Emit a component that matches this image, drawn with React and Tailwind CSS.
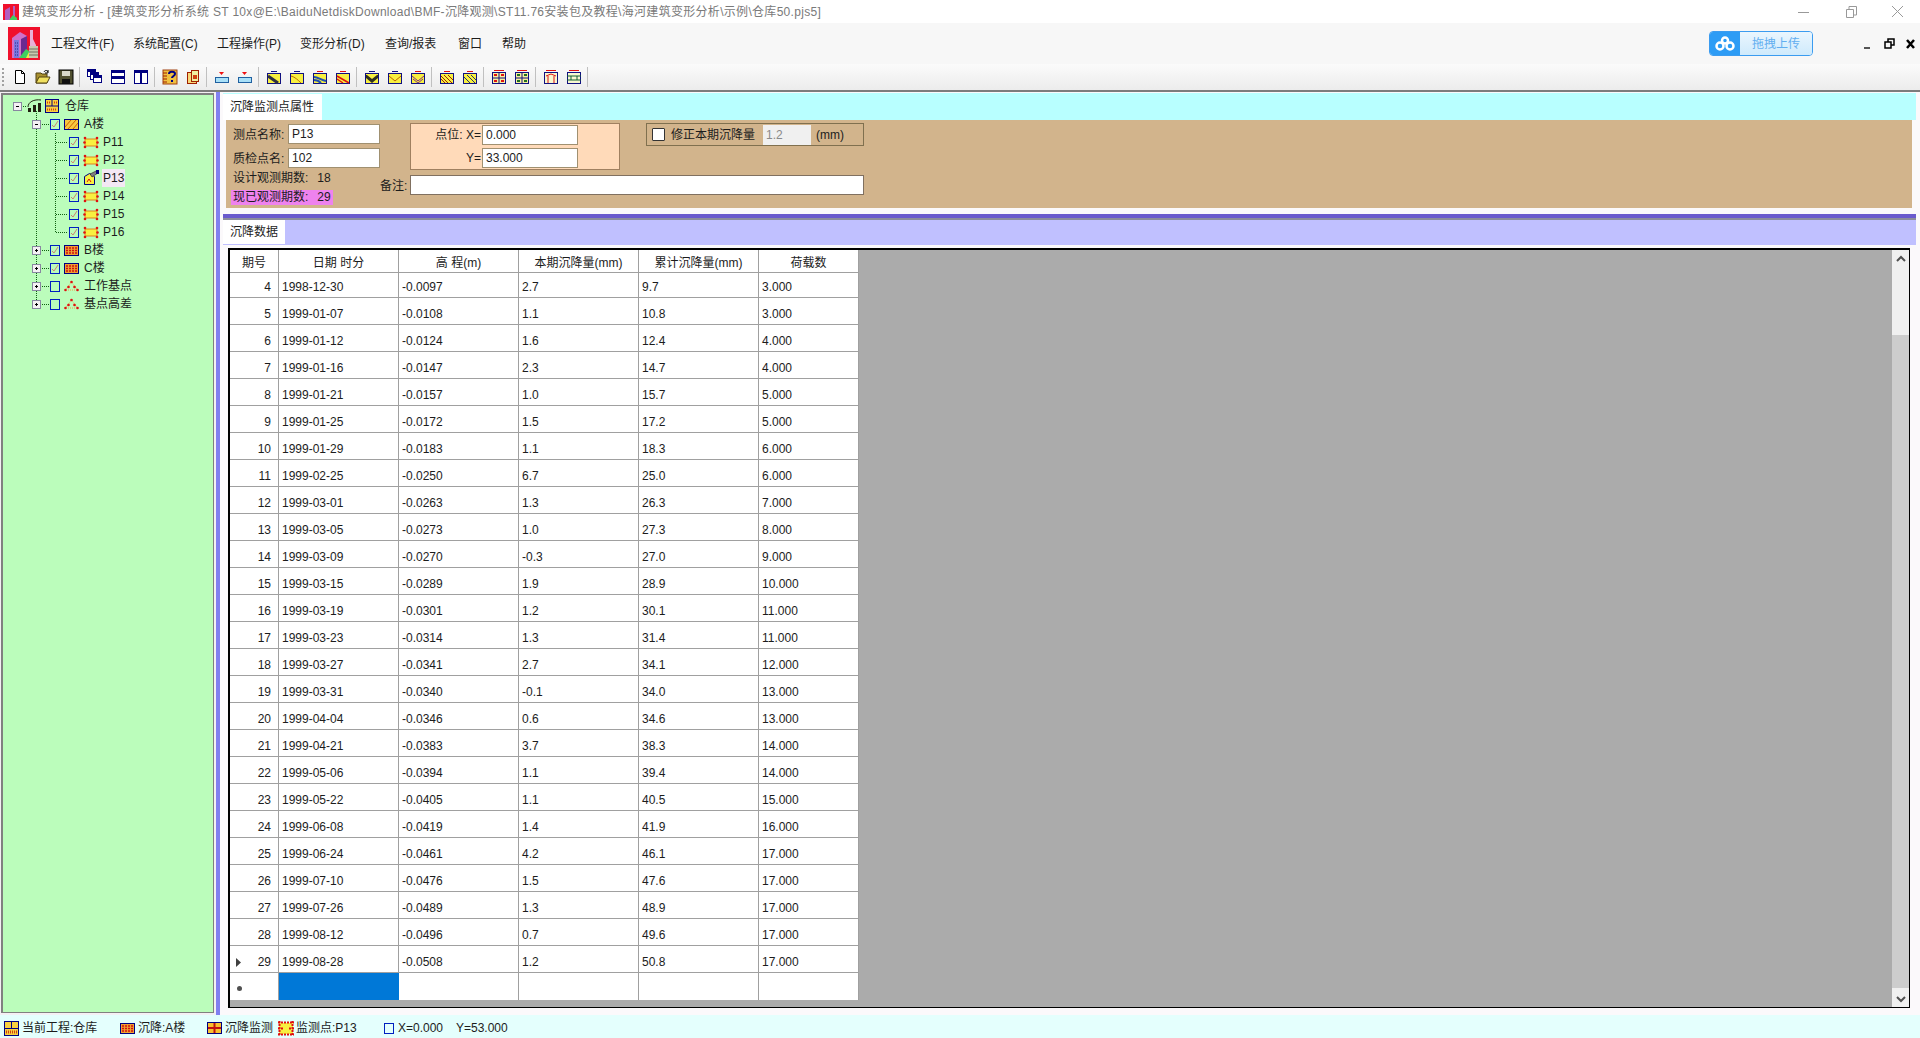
const FONT = "font-['Liberation_Sans','Noto_Sans_CJK_SC',sans-serif]";

const menus = [
  ['工程文件(F)', 'w-[82px]'],
  ['系统配置(C)', 'w-[84px]'],
  ['工程操作(P)', 'w-[83px]'],
  ['变形分析(D)', 'w-[85px]'],
  ['查询/报表', 'w-[73px]'],
  ['窗口', 'w-[44px]'],
  ['帮助', 'w-[30px]'],
];

const rows = [
  [4, '1998-12-30', '-0.0097', '2.7', '9.7', '3.000'],
  [5, '1999-01-07', '-0.0108', '1.1', '10.8', '3.000'],
  [6, '1999-01-12', '-0.0124', '1.6', '12.4', '4.000'],
  [7, '1999-01-16', '-0.0147', '2.3', '14.7', '4.000'],
  [8, '1999-01-21', '-0.0157', '1.0', '15.7', '5.000'],
  [9, '1999-01-25', '-0.0172', '1.5', '17.2', '5.000'],
  [10, '1999-01-29', '-0.0183', '1.1', '18.3', '6.000'],
  [11, '1999-02-25', '-0.0250', '6.7', '25.0', '6.000'],
  [12, '1999-03-01', '-0.0263', '1.3', '26.3', '7.000'],
  [13, '1999-03-05', '-0.0273', '1.0', '27.3', '8.000'],
  [14, '1999-03-09', '-0.0270', '-0.3', '27.0', '9.000'],
  [15, '1999-03-15', '-0.0289', '1.9', '28.9', '10.000'],
  [16, '1999-03-19', '-0.0301', '1.2', '30.1', '11.000'],
  [17, '1999-03-23', '-0.0314', '1.3', '31.4', '11.000'],
  [18, '1999-03-27', '-0.0341', '2.7', '34.1', '12.000'],
  [19, '1999-03-31', '-0.0340', '-0.1', '34.0', '13.000'],
  [20, '1999-04-04', '-0.0346', '0.6', '34.6', '13.000'],
  [21, '1999-04-21', '-0.0383', '3.7', '38.3', '14.000'],
  [22, '1999-05-06', '-0.0394', '1.1', '39.4', '14.000'],
  [23, '1999-05-22', '-0.0405', '1.1', '40.5', '15.000'],
  [24, '1999-06-08', '-0.0419', '1.4', '41.9', '16.000'],
  [25, '1999-06-24', '-0.0461', '4.2', '46.1', '17.000'],
  [26, '1999-07-10', '-0.0476', '1.5', '47.6', '17.000'],
  [27, '1999-07-26', '-0.0489', '1.3', '48.9', '17.000'],
  [28, '1999-08-12', '-0.0496', '0.7', '49.6', '17.000'],
  [29, '1999-08-28', '-0.0508', '1.2', '50.8', '17.000'],
];

const COLS = 'grid grid-cols-[49px_120px_120px_120px_120px_100px] w-[629px]';

function Logo() {
  return (
    <svg width="32" height="33" viewBox="0 0 32 33" className="shrink-0">
      <rect width="32" height="33" fill="#f0102c" />
      <path d="M4 31V11l8-6 7 4v22z" fill="#d070c8" />
      <path d="M6 31V13h5v18z" fill="#7878e0" />
      <path d="M13 31V12l6-3v22z" fill="#6a2a90" />
      <path d="M22 31V3h3v9l3 6v13z" fill="#e8b0d8" />
      <path d="M11 31l7-9 6 4v5z" fill="#40d060" />
      <path d="M18 31l3-6 3 3v3z" fill="#f0f040" />
      <rect x="21" y="19" width="9" height="12" fill="#c8c8b0" />
      <path d="M21 22h9M21 25h9M21 28h9" stroke="#707060" />
      <path d="M7 16h3M7 19h3M7 22h3M7 25h3M7 28h3" stroke="#302080" strokeDasharray="1 1" />
    </svg>
  );
}

const surveyFills = {
  dark: ['#101080', <path key="a" d="M2 7l10 7" stroke="#303040" strokeWidth="3" />],
  line: ['#101080', <path key="a" d="M2 7c4 1 7 4 10 7" stroke="#c07000" fill="none" />],
  curve: ['#e01010', <path key="a" d="M2 8c4 0 7 3 12 4M2 11c3 0 5 1 7 3" stroke="#2050b0" strokeWidth="2" fill="none" />],
  red: ['#e01010', <path key="a" d="M2 7l12 7M2 10l6 4" stroke="#e01010" strokeWidth="1.500" />],
  vdark: ['#101080', <path key="a" d="M2 6h1l5 4 5-4h1v3l-6 5-6-5z" fill="#303020" />],
  vline: ['#101080', <path key="a" d="M2 7l6 5 6-5" stroke="#c06000" fill="none" />],
  vcurve: ['#e01010', <path key="a" d="M2 7l6 5 6-5M3 10l5 4 5-4" stroke="#803080" fill="none" />],
  fine: ['#e01010', <path key="a" d="M2 7l7 7M5 6l8 8M2 10l4 4M9 6l5 5" stroke="#a02000" />],
  fine2: ['#e01010', <path key="a" d="M2 8l6 6M5 6l8 8M9 6l5 5" stroke="#203070" />],
};

function Tool({ kind }) {
  const stroke = '#000080';
  if (kind === 'new') {
    return (
      <svg width="16" height="16" viewBox="0 0 16 16">
        <path d="M3.500 1.500h6l3 3v10h-9z" fill="#fff" stroke="#000" />
        <path d="M9.500 1.500v3h3" fill="none" stroke="#000" />
      </svg>
    );
  }
  if (kind === 'open') {
    return (
      <svg width="16" height="16" viewBox="0 0 16 16">
        <path d="M1 4h5l1 1h5v9H1z" fill="#a89030" stroke="#504010" />
        <path d="M1 14l3-6h11l-3 6z" fill="#f0e060" stroke="#504010" />
        <path d="M9 3c1-2 3-2 4 0M13 1v3h-3" fill="none" stroke="#000" />
      </svg>
    );
  }
  if (kind === 'save') {
    return (
      <svg width="16" height="16" viewBox="0 0 16 16">
        <rect x="1" y="1" width="14" height="14" fill="#505030" stroke="#000" />
        <rect x="4" y="2" width="8" height="5" fill="#d8d8c8" />
        <rect x="4" y="10" width="8" height="5" fill="#101010" />
      </svg>
    );
  }
  if (kind === 'stack') {
    return (
      <svg width="16" height="16" viewBox="0 0 16 16">
        {[1, 4, 7].map((o) => (
          <g key={o}>
            <rect x={o - 0.500} y={o - 0.500} width="8" height="7" fill="#fff" stroke={stroke} />
            <rect x={o - 1} y={o - 1} width="9" height="3" fill={stroke} />
          </g>
        ))}
      </svg>
    );
  }
  if (kind === 'hsplit' || kind === 'vsplit') {
    return (
      <svg width="16" height="16" viewBox="0 0 16 16">
        <rect x="1.500" y="1.500" width="13" height="13" fill="#fff" stroke={stroke} />
        <rect x="1" y="1" width="14" height="3" fill={stroke} />
        {kind === 'hsplit' ? <rect x="1" y="7" width="14" height="3" fill={stroke} /> : <rect x="7" y="2" width="2" height="13" fill={stroke} />}
      </svg>
    );
  }
  if (kind === 'help') {
    return (
      <svg width="16" height="16" viewBox="0 0 16 16">
        <rect x="1" y="1" width="14" height="14" fill="#f0c040" stroke="#a04010" />
        <path d="M1 4h4M1 7h4M1 10h4M1 13h4" stroke="#a02000" />
        <path d="M7 5c0-3 6-3 6 0 0 2-3 2-3 4M10 11v2" fill="none" stroke="#000080" strokeWidth="2" />
      </svg>
    );
  }
  if (kind === 'doc') {
    return (
      <svg width="16" height="16" viewBox="0 0 16 16">
        <rect x="2.500" y="3.500" width="9" height="11" fill="#f8d878" stroke="#a02000" />
        <rect x="6.500" y="1.500" width="7" height="11" fill="#f0f0a0" stroke="#a02000" />
        <rect x="8" y="6" width="4" height="4" fill="#d04010" />
      </svg>
    );
  }
  if (kind === 'cyan') {
    return (
      <svg width="16" height="16" viewBox="0 0 16 16">
        <path d="M5 3h5L7.500 6z" fill="#f01010" />
        <path d="M2 5h3M10 5h4" stroke="#f8f8f8" />
        <rect x="1.500" y="8.500" width="13" height="5" fill="#a8e0f8" stroke="#2060a0" />
      </svg>
    );
  }
  const survey = surveyFills[kind];
  if (survey) {
    return (
      <svg width="16" height="16" viewBox="0 0 16 16">
        <rect x="5" y="2" width="6" height="1" fill={survey[0]} />
        <rect x="1.500" y="4.500" width="13" height="10" fill="#f8f040" stroke="#101080" />
        {survey[1]}
      </svg>
    );
  }
  if (kind === 'grid1' || kind === 'grid2') {
    return (
      <svg width="16" height="16" viewBox="0 0 16 16">
        <rect x="1.500" y="3.500" width="13" height="11" fill="#f8f0a0" stroke="#101080" />
        <rect x="3" y="1" width="10" height="1" fill="#e01010" />
        <path d="M1 9h14M8 4v11" stroke="#101080" />
        <path d="M3 6h3M10 6h3M3 12h3M10 12h3" stroke={kind === 'grid1' ? '#e01010' : '#207020'} strokeWidth="2" />
      </svg>
    );
  }
  return (
    <svg width="16" height="16" viewBox="0 0 16 16">
      <rect x="1.500" y="3.500" width="13" height="11" fill="#f8f8d0" stroke="#101080" />
      <rect x="3" y="1" width="10" height="1" fill="#e01010" />
      {kind === 'frame1' ? (
        <path d="M3 7l5-2 5 2M5 7v7M11 7v7" stroke="#e01010" fill="none" />
      ) : (
        <path d="M1 7h14M1 11h14M5 7v4M11 7v4" stroke="#106030" />
      )}
    </svg>
  );
}

const toolGroups = [
  ['new', 'open', 'save'],
  ['stack', 'hsplit', 'vsplit'],
  ['help', 'doc'],
  ['cyan', 'cyan'],
  ['dark', 'line', 'curve', 'red'],
  ['vdark', 'vline', 'vcurve'],
  ['fine', 'fine2'],
  ['grid1', 'grid2'],
  ['frame1', 'frame2'],
];

function Check({ checked }) {
  return (
    <svg width="12" height="13" viewBox="0 0 12 13" className="shrink-0">
      <rect x="1.500" y="1.500" width="9" height="10" fill="none" stroke="#0020c0" />
      {checked && <path d="M3 7l2 2 4-6" fill="none" stroke="#d08070" />}
    </svg>
  );
}

function PointIcon() {
  return (
    <svg width="16" height="13" viewBox="0 0 16 13" className="shrink-0">
      <rect x="2" y="3" width="12" height="7" fill="#f8f040" />
      <path d="M2 3h12v7H2z" fill="none" stroke="#e08020" />
      {[[2, 2], [14, 2], [1.500, 6.500], [14.500, 6.500], [2, 11], [14, 11]].map(([x, y]) => (
        <circle key={`${x}-${y}`} cx={x} cy={y} r="1.300" fill="#e01010" />
      ))}
    </svg>
  );
}

function ActivePointIcon() {
  return (
    <svg width="16" height="16" viewBox="0 0 16 16" className="shrink-0">
      <path d="M1.500 6.500l5-3 5 3v8h-10z" fill="#f8f040" stroke="#000080" />
      <path d="M4 12l2-3 2 3" fill="none" stroke="#e01010" />
      <path d="M7 4l6-3 2 2-6 4z" fill="#808080" stroke="#000" strokeWidth="0.500" />
      <rect x="13" y="0" width="3" height="4" fill="#000080" />
    </svg>
  );
}

function BlockIcon({ orange }) {
  return (
    <svg width="15" height="11" viewBox="0 0 15 11" className="shrink-0">
      <rect x="0.500" y="0.500" width="14" height="10" fill={orange ? '#f8c840' : '#f0a030'} stroke="#000080" />
      {orange ? (
        <path d="M1 8l6-7M4 10l8-9M9 10l5-6" stroke="#d06000" />
      ) : (
        <path d="M2 3h11M2 5.500h11M2 8h11" stroke="#d01010" strokeWidth="1.500" strokeDasharray="2 1" />
      )}
    </svg>
  );
}

function TriangleIcon() {
  return (
    <svg width="15" height="14" viewBox="0 0 15 14" className="shrink-0">
      <path d="M7.500 3L1.500 11M7.500 3l6 8M4 11h7" stroke="#f0a040" strokeDasharray="1 1" fill="none" />
      {[[7.500, 3], [1.500, 11], [13.500, 11], [4.500, 8], [10.500, 8]].map(([x, y]) => (
        <circle key={`${x}-${y}`} cx={x} cy={y} r="1.300" fill="#e01010" />
      ))}
    </svg>
  );
}

function Expander({ x, open }) {
  return (
    <g>
      <rect x={x - 3.500} y="5.500" width="8" height="8" fill="#f4f0f4" stroke="#8888a0" />
      <path d={`M${x - 1} 9.500h3`} stroke="#000" />
      {!open && <path d={`M${x + 0.500} 8v3`} stroke="#000" />}
    </g>
  );
}

const Dot = (props) => <path stroke="#106010" strokeDasharray="1 1" fill="none" {...props} />;

function RootRow() {
  return (
    <div className="flex items-center h-[18px]">
      <svg width="60" height="18" viewBox="0 0 60 18" className="shrink-0">
        <Dot d="M36.500 14v4" />
        <Dot d="M21 9.500h6" />
        <Expander x={17} open />
        <path d="M28 15v-4h3v4zM33 15V8h3v7zM38 15V6h3v9z" fill="#202010" />
        <path d="M28 10c0-5 6-8 13-7" fill="none" stroke="#202010" />
        <rect x="45.500" y="2.500" width="13" height="13" fill="#f8d040" stroke="#000080" />
        <path d="M45 9h14M52 3v6" stroke="#000080" />
        <path d="M47 12.500h10M47 5.500h3M54 5.500h3" stroke="#d04010" strokeWidth="2" strokeDasharray="1 1" />
      </svg>
      <span className="ml-[5px]">仓库</span>
    </div>
  );
}

function BranchRow({ label, open, checked, last, icon }) {
  return (
    <div className="flex items-center h-[18px]">
      <svg width="49" height="18" viewBox="0 0 49 18" className="shrink-0">
        <Dot d={last ? 'M36.500 0v9' : 'M36.500 0v18'} />
        <Dot d="M40 9.500h9" />
        <Expander x={36} open={open} />
      </svg>
      <Check checked={checked} />
      <span className="ml-[3px] flex">{icon === 'tri' ? <TriangleIcon /> : <BlockIcon orange={icon === 'a'} />}</span>
      <span className="ml-[5px]">{label}</span>
    </div>
  );
}

function LeafRow({ label, active, last }) {
  return (
    <div className="flex items-center h-[18px]">
      <svg width="68" height="18" viewBox="0 0 68 18" className="shrink-0">
        <Dot d="M36.500 0v18" />
        <Dot d={last ? 'M55.500 0v9' : 'M55.500 0v18'} />
        <Dot d="M56 9.500h11" />
      </svg>
      <Check checked />
      <span className="ml-[3px] flex">{active ? <ActivePointIcon /> : <PointIcon />}</span>
      <span className={`ml-[3px] px-[1px] ${active ? 'bg-[#f4e8f4]' : ''}`}>{label}</span>
    </div>
  );
}

function Field({ value, className = '' }) {
  return (
    <div className={`h-[20px] bg-white border border-[#a09070] pl-[3px] leading-[19px] ${className}`}>{value}</div>
  );
}

function Chevron({ down }) {
  return (
    <svg width="10" height="8" viewBox="0 0 10 8">
      <path d={down ? 'M1 2l4 4 4-4' : 'M1 6l4-4 4 4'} fill="none" stroke="#505050" strokeWidth="2" />
    </svg>
  );
}

function StatusIcon({ kind }) {
  if (kind === 'project') {
    return (
      <svg width="15" height="15" viewBox="0 0 15 15" className="shrink-0">
        <rect x="0.500" y="0.500" width="14" height="14" fill="#f8d040" stroke="#000080" />
        <path d="M0 7.500h15M7.500 0v7" stroke="#000080" />
        <path d="M2 11h11" stroke="#d04010" strokeWidth="3" strokeDasharray="1 1" />
      </svg>
    );
  }
  if (kind === 'lot') return <BlockIcon />;
  if (kind === 'monitor') {
    return (
      <svg width="15" height="12" viewBox="0 0 15 12" className="shrink-0">
        <rect x="0.500" y="0.500" width="14" height="11" fill="#f8c030" stroke="#000080" />
        <path d="M1 6h13M7.500 1v10" stroke="#c01010" strokeWidth="2" />
      </svg>
    );
  }
  return (
    <svg width="16" height="15" viewBox="0 0 16 15" className="shrink-0">
      <rect x="1" y="2" width="14" height="11" fill="#f8f040" />
      <path d="M0 1.500h16M0 13.500h16M0 7.500h5M11 7.500h5" stroke="#e01010" strokeWidth="2" strokeDasharray="2 1" />
      <path d="M1.500 0v15M14.500 0v15" stroke="#e01010" strokeWidth="2" strokeDasharray="2 1" />
    </svg>
  );
}

export default function App() {
  return (
    <div className={`${FONT} w-[1920px] h-[1038px] overflow-hidden flex flex-col text-[12px] text-[#1c1c1c] bg-white`}>
      {/* Title bar */}
      <div className="h-[23px] shrink-0 flex items-center bg-white">
        <svg width="16" height="16" viewBox="0 0 16 16" className="ml-[3px] shrink-0">
          <rect width="16" height="16" fill="#f0102c" />
          <path d="M2 16V6l5-3v13zM10 16V2h2v14z" fill="#b060c0" />
          <path d="M6 16l4-5 4 3v2z" fill="#40d060" />
        </svg>
        <span className="ml-[3px] text-[#7a7a7a] whitespace-nowrap tracking-[0.3px]">建筑变形分析 - [建筑变形分析系统 ST 10x@E:\BaiduNetdiskDownload\BMF-沉降观测\ST11.76安装包及教程\海河建筑变形分析\示例\仓库50.pjs5]</span>
        <div className="ml-auto mr-[4px] flex items-center">
          <svg width="46" height="20" viewBox="0 0 46 20"><path d="M0 10.500h11" stroke="#999" /></svg>
          <svg width="47" height="20" viewBox="0 0 47 20"><path d="M2.500 7.500h7v8h-7zM5 7V4.500h7.500V13H10" fill="none" stroke="#999" /></svg>
          <svg width="25" height="20" viewBox="0 0 25 20"><path d="M1 4l11 11M12 4L1 15" stroke="#999" /></svg>
        </div>
      </div>

      {/* Menu bar */}
      <div className="h-[41px] shrink-0 flex items-center bg-[#f7f7f7]">
        <div className="ml-[8px]"><Logo /></div>
        <div className="ml-[11px] flex whitespace-nowrap">
          {menus.map(([m, w]) => <span key={m} className={w}>{m}</span>)}
        </div>
        <div className="ml-auto flex items-center">
          <div className="flex w-[104px] h-[25px] rounded-[4px] border border-[#3b9cf0] overflow-hidden">
            <div className="w-[30px] bg-[#2d9cf5] flex items-center justify-center">
              <svg width="20" height="15" viewBox="0 0 20 15">
                <g fill="none" stroke="#fff" strokeWidth="2.500">
                  <circle cx="10" cy="4.500" r="3" />
                  <circle cx="5" cy="10" r="3.500" />
                  <circle cx="15" cy="10" r="3.500" />
                </g>
              </svg>
            </div>
            <div className="flex-1 bg-gradient-to-b from-[#eaf6fe] to-[#cfeafc] text-[#62aef0] flex items-center justify-center">拖拽上传</div>
          </div>
          <div className="ml-[49px] flex items-center">
            <svg width="20" height="14" viewBox="0 0 20 14"><path d="M2 11h6" stroke="#555" strokeWidth="2" /></svg>
            <svg width="20" height="14" viewBox="0 0 20 14"><path d="M3 5h6v6H3zM6 5V2h6v6H9" fill="none" stroke="#000" strokeWidth="1.500" /></svg>
            <svg width="18" height="14" viewBox="0 0 18 14"><path d="M5 3l7 8M12 3l-7 8" stroke="#000" strokeWidth="2.500" /></svg>
          </div>
        </div>
      </div>

      {/* Toolbar */}
      <div className="h-[28px] shrink-0 flex items-center pl-[2px] bg-gradient-to-b from-[#fbfbfb] to-[#ececec] border-b-2 border-[#7c7c7c]">
        <div className="w-[3px] h-[18px] border-l-2 border-dotted border-[#a0a0a0] mr-[3px]" />
        {toolGroups.map((group, i) => (
          <div key={i} className="flex items-center">
            {group.map((kind, j) => (
              <div key={j} className="w-[23px] flex items-center justify-center"><Tool kind={kind} /></div>
            ))}
            <div className="mx-[2px] w-[1px] h-[20px] bg-[#c0c0c0]" />
            <div className="w-[1px]" />
          </div>
        ))}
      </div>

      {/* Main */}
      <div className="flex-1 min-h-0 flex bg-[#f4f0f4]">
        <div className="w-[213px] shrink-0 ml-[1px] mb-[2px] mt-[1px] bg-[#bbfdbb] border-l-2 border-t-2 border-[#808080] border-r border-b pt-[2px]">
          <div className="-ml-[3px]">
            <RootRow />
            <BranchRow label="A楼" open checked icon="a" />
            {['P11', 'P12', 'P13', 'P14', 'P15', 'P16'].map((p, i) => (
              <LeafRow key={p} label={p} active={p === 'P13'} last={i === 5} />
            ))}
            <BranchRow label="B楼" checked icon="b" />
            <BranchRow label="C楼" checked icon="b" />
            <BranchRow label="工作基点" icon="tri" />
            <BranchRow label="基点高差" icon="tri" last />
          </div>
        </div>
        <div className="w-[4px] shrink-0 ml-[2px] bg-[#8080f0]" />
        <div className="flex-1 min-w-0 flex flex-col pl-[3px] pr-[4px] bg-[#fbf9fb]">
          {/* Properties panel */}
          <div className="h-[27px] shrink-0 mt-[1px] bg-[#b8ffff] flex items-end">
            <div className="h-[26px] w-[99px] bg-white flex items-center pl-[7px]">沉降监测点属性</div>
          </div>
          <div className="h-[88px] shrink-0 ml-[3px] mr-[4px] bg-[#d2b48c] flex">
            <div className="w-[154px] shrink-0 pl-[7px] pt-[4px]">
              <div className="flex items-center gap-[2px]">
                <span className="w-[55px] pt-[2px]">测点名称:</span>
                <Field value="P13" className="w-[95px]" />
              </div>
              <div className="mt-[4px] flex items-center gap-[2px]">
                <span className="w-[55px] pt-[2px]">质检点名:</span>
                <Field value="102" className="w-[95px]" />
              </div>
              <div className="mt-[1px] h-[18px] leading-[18px]">设计观测期数:<span className="ml-[9px]">18</span></div>
              <div className="mt-[3px] ml-[-2px] w-[102px] h-[15px] leading-[15px] pl-[2px] bg-[#ee82ee]">现已观测期数:<span className="ml-[9px]">29</span></div>
            </div>
            <div className="pt-[3px]">
              <div className="flex pl-[30px]">
                <div className="w-[210px] h-[47px] bg-[#ffdab9] border border-[#a08060] flex flex-col pt-[1px] pl-[70px] gap-[3px]">
                  <div className="flex items-center">
                    <span className="w-[0px] mr-[2px] whitespace-nowrap flex justify-end">点位: X=</span>
                    <Field value="0.000" className="w-[96px] ml-[-1px]" />
                  </div>
                  <div className="flex items-center">
                    <span className="w-[0px] mr-[2px] whitespace-nowrap flex justify-end">Y=</span>
                    <Field value="33.000" className="w-[96px] ml-[-1px]" />
                  </div>
                </div>
                <div className="ml-[26px] w-[218px] h-[23px] border border-[#80704f] flex items-center pl-[5px]">
                  <span className="w-[13px] h-[13px] bg-white border border-[#333] rounded-[1px]" />
                  <span className="ml-[6px]">修正本期沉降量</span>
                  <div className="ml-[8px] w-[48px] h-[20px] bg-[#f0f0f0] text-[#8a8a8a] leading-[20px] pl-[3px]">1.2</div>
                  <span className="ml-[5px]">(mm)</span>
                </div>
              </div>
              <div className="mt-[4px] flex items-center">
                <span className="w-[30px] pt-[3px]">备注:</span>
                <div className="w-[454px] h-[20px] bg-white border border-[#807060]" />
              </div>
            </div>
          </div>

          <div className="h-[6px] shrink-0" />
          <div className="h-[4px] shrink-0 bg-[#6a5acd]" />
          <div className="h-[2px] shrink-0 bg-[#8c8c9c]" />

          {/* Data panel */}
          <div className="h-[25px] shrink-0 bg-[#c0c0ff] flex items-start">
            <div className="h-[24px] w-[62px] bg-white flex items-center pl-[7px]">沉降数据</div>
          </div>
          <div className="h-[3px] shrink-0" />
          <div className="h-[760px] shrink-0 ml-[5px] mr-[6px] border-2 border-black border-r-[1px] border-b-[1px] bg-[#ababab] flex">
            <div className="flex-1 min-w-0">
              <div className={`${COLS} h-[21px] bg-white`}>
                {['期号', '日期 时分', '高 程(m)', '本期沉降量(mm)', '累计沉降量(mm)', '荷载数'].map((h) => (
                  <div key={h} className="border-r border-b border-[#a0a0a0] flex items-center justify-center whitespace-nowrap pt-[4px]">{h}</div>
                ))}
              </div>
              {rows.map((r, i) => (
                <div key={r[0]} className={`${COLS} h-[27px] bg-white`}>
                  <div className="border-r border-b border-[#a0a0a0] flex items-center justify-end pr-[7px] pt-[6px]">
                    {i === rows.length - 1 && (
                      <svg width="6" height="9" viewBox="0 0 6 9" className="mr-auto ml-[6px]"><path d="M0 0l5 4.500L0 9z" fill="#404040" /></svg>
                    )}
                    {r[0]}
                  </div>
                  {r.slice(1).map((c, k) => (
                    <div key={k} className="border-r border-b border-[#a0a0a0] flex items-center pl-[3px] pt-[6px]">{c}</div>
                  ))}
                </div>
              ))}
              <div className={`${COLS} h-[27px] bg-white`}>
                <div className="border-r border-[#a0a0a0] flex items-center pl-[7px] pt-[4px]">
                  <span className="w-[5px] h-[5px] rounded-full bg-[#505050]" />
                </div>
                <div className="bg-[#0078d7]" />
                <div className="border-r border-[#a0a0a0]" />
                <div className="border-r border-[#a0a0a0]" />
                <div className="border-r border-[#a0a0a0]" />
                <div className="border-r border-[#a0a0a0]" />
              </div>
            </div>
            <div className="w-[17px] shrink-0 bg-[#f0f0f0] flex flex-col">
              <div className="h-[17px] flex items-center justify-center"><Chevron /></div>
              <div className="h-[68px]" />
              <div className="flex-1 bg-[#cdcdcd]" />
              <div className="h-[2px]" />
              <div className="h-[17px] flex items-center justify-center"><Chevron down /></div>
            </div>
          </div>
        </div>
      </div>

      {/* Status bar */}
      <div className="h-[23px] shrink-0 flex items-center pt-[3px] bg-[#e4fffd] whitespace-nowrap">
        <div className="ml-[4px]"><StatusIcon kind="project" /></div>
        <span className="ml-[3px] w-[98px]">当前工程:仓库</span>
        <StatusIcon kind="lot" />
        <span className="ml-[3px] w-[69px]">沉降:A楼</span>
        <StatusIcon kind="monitor" />
        <span className="ml-[3px] w-[53px]">沉降监测</span>
        <StatusIcon kind="point" />
        <span className="ml-[2px] w-[87px]">监测点:P13</span>
        <Check />
        <span className="ml-[3px] w-[58px]">X=0.000</span>
        <span>Y=53.000</span>
      </div>
    </div>
  );
}
